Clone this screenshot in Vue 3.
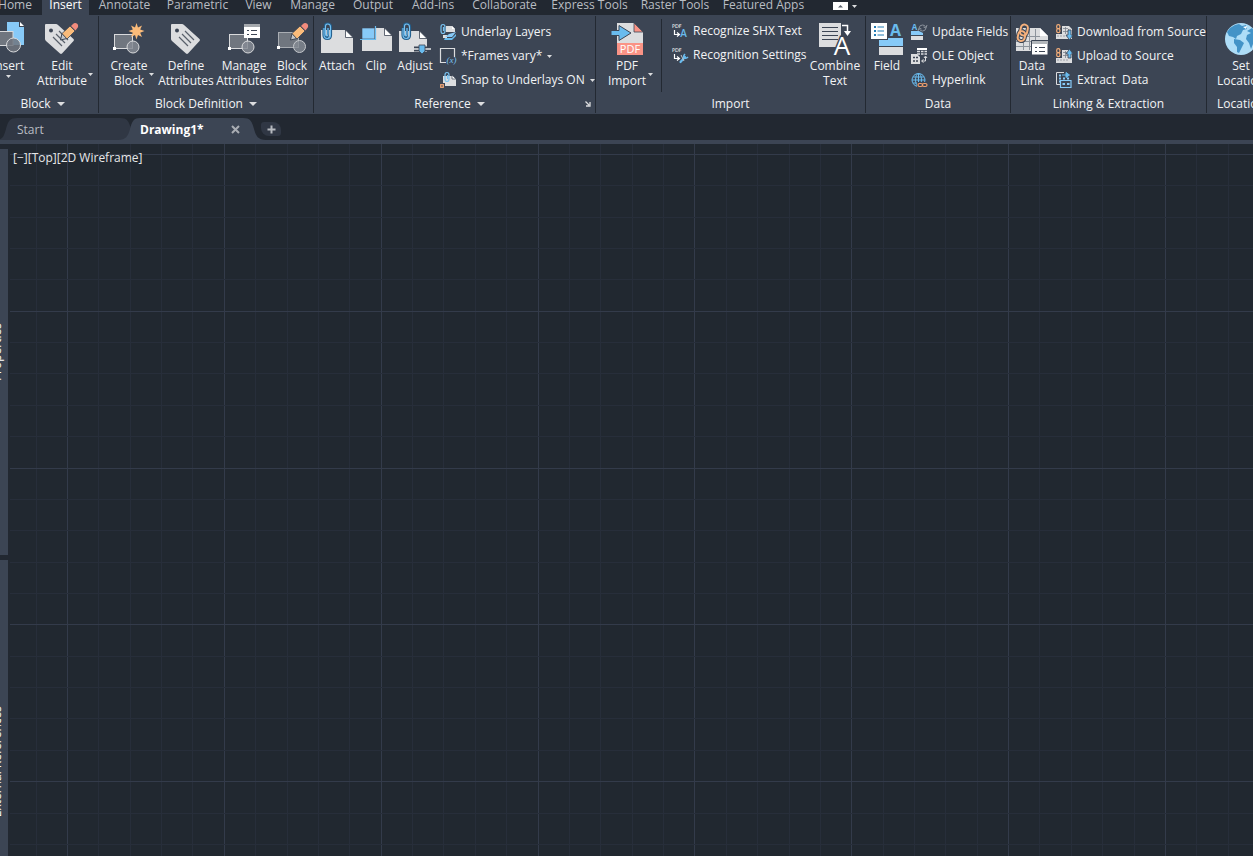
<script setup>
const menuTabs = [
  { label: 'Home', size: 'w50' },
  { label: 'Insert', size: 'w47', active: true },
  { label: 'Annotate', size: 'w67' },
  { label: 'Parametric', size: 'w75' },
  { label: 'View', size: 'w43' },
  { label: 'Manage', size: 'w61' },
  { label: 'Output', size: 'w56' },
  { label: 'Add-ins', size: 'w60' },
  { label: 'Collaborate', size: 'w79' },
  { label: 'Express Tools', size: 'w87' },
  { label: 'Raster Tools', size: 'w80' },
  { label: 'Featured Apps', size: 'w93' }
]

const tag = '<path d="M-1 3Q-1 2 0 2H10Q11 2 12 3L27.500 17Q28.500 18 27.500 19L16 31.500Q15 32.300 14 31.500L0 19Q-1 18 -1 17Z" fill="#dcdddf"/><circle cx="5" cy="8.500" r="2" fill="#3c4554"/><path d="M13 9L22 18M10 12L19 21M7 15L16 24" stroke="#59606b" stroke-width="1.200" fill="none"/>'
const pencil = '<path d="M14.500 18L16 11.500L21 16.500Z" fill="#c4c7cb" stroke="#3c4554"/><path d="M16 11.500L24 4L29 9L21 17Z" fill="#fabb7a" stroke="#3c4554" stroke-width=".8"/><path d="M25 4L27 2Q29 0 31.500 2Q33 4.500 31 6.500L29.500 8.500Z" fill="#f28b7d"/>'
const block = '<rect x="1.500" y="12.500" width="18" height="14" fill="#70767f" stroke="#d9dadc"/><circle cx="20" cy="25" r="6" fill="#858b94" fill-opacity=".85" stroke="#d9dadc"/><rect x="0" y="25" width="3" height="3" fill="#fff"/>'
const clip = '<path d="M7 6V13Q7 15 5.500 15Q4 15 4 13V4Q4 1.500 6.500 1.500Q10 1.500 10 5V13Q10 17 6.500 17Q2.500 17 2.500 13V6" fill="none" stroke="#235f8c" stroke-width="2.200"/><path d="M7 6V12Q7 14 6 14Q4.500 14 4.500 12V4.500Q4.500 2 6.500 2Q9.500 2 9.500 5V13Q9.500 16.500 6.500 16.500Q3 16.500 3 13V6" fill="none" stroke="#78c2f2" stroke-width="1.100"/>'
const miniClip = '<path d="M3.500 3V7M1 3V7Q1 9.500 3 9.500Q5 9.500 5 7V3Q5 .500 3 .500Q1 .500 1 3" fill="none" stroke="#79c3f2" stroke-width="1.200"/>'
const pdfMini = '<text x="0" y="5" font-family="DejaVu Sans" font-size="5" fill="#fff">PDF</text><path d="M2.500 7V11.500H6.500M5 9.500L7.500 11.500L5 13.500" fill="none" stroke="#fff" stroke-width="1.200"/>'
const miniGrid = '<path d="M6 2H13L16 5V14H6Z" fill="#dcdddf"/><path d="M7 4.500H12M7 7.500H15M7 10.500H15M9.500 3V12M12.500 5V12" stroke="#7b818a" stroke-width=".8"/><path d="M0 10H16V15H0Z" fill="#dcdddf"/><path d="M2 11V13M5 11V13M8 11V13M11 11V13" stroke="#8d939b" stroke-width=".8"/><rect x=".7" y=".7" width="3.200" height="4" rx="1.500" fill="none" stroke="#f2ac78" stroke-width="1.200"/><rect x=".7" y="4.700" width="3.200" height="4" rx="1.500" fill="none" stroke="#f2ac78" stroke-width="1.200"/>'

const icons = {
  insert: '<path d="M15 0H27V5H32V23H15Z" fill="#87caf8"/><path d="M28 0L32 4H28Z" fill="#fff"/><rect x="0" y="9.500" width="21" height="14" fill="#70767f" stroke="#d9dadc"/><circle cx="21.500" cy="23" r="7" fill="#70767f" fill-opacity=".85" stroke="#d9dadc"/>',
  editAttribute: tag + pencil,
  createBlock: block + '<path d="M23.500 1L25 5.500L29 3.500L27.200 7.500L31.500 9L27.200 10.700L29 15L25 13L23.500 17.500L22 13L18 15L19.800 10.700L15.500 9L19.800 7.500L18 3.500L22 5.500Z" fill="#fabb7a"/>',
  define: '<g transform="translate(2 0)">' + tag + '</g>',
  manage: block + '<rect x="16" y="2" width="16" height="14" fill="#fff"/><rect x="16" y="2" width="16" height="3" fill="#a4a8ad"/><path d="M19 8.500H21M23 8.500H29M19 12.500H21M23 12.500H29" stroke="#3c4554"/>',
  editor: '<rect x="2.500" y="10.500" width="20" height="15" fill="#70767f" stroke="#a9adb3"/><circle cx="23.500" cy="24.500" r="6" fill="#858b94" fill-opacity=".8" stroke="#c5c8cc"/><rect x="1" y="24" width="3" height="3" fill="#fff"/>' + pencil,
  attach: '<path d="M0 8H24L32 16V31H0Z" fill="#dcdddf"/><path d="M24.500 8L32 15.500H24.500Z" fill="#fff" stroke="#3c4554" stroke-width=".8"/>' + clip,
  clip: '<path d="M2 6H24L32 14V29H2Z" fill="#dcdddf"/><path d="M24.500 6L32 13.500H24.500Z" fill="#fff" stroke="#3c4554" stroke-width=".8"/><path d="M2 6H14.500V17H2Z" fill="#87caf8" stroke="#3c4554" stroke-width=".6"/><path d="M0 17.500H15.500V4" fill="none" stroke="#69bbee" stroke-width="1.200"/>',
  adjust: '<path d="M0 9H20L28 17V30H0Z" fill="#dcdddf"/><path d="M20.500 9L28 16.500H20.500Z" fill="#fff" stroke="#3c4554" stroke-width=".8"/><path d="M15 24.500H32V29.500H15Z" fill="#3c4554"/><path d="M15 27H32" stroke="#e6e7e8" stroke-width="1.500"/><path d="M20 23H26V29L23 32L20 29Z" fill="#69bbee" stroke="#3c4554" stroke-width=".8"/><g transform="translate(1 0)">' + clip + '</g>',
  pdf: '<path d="M6 1H23L32 10V33H6Z" fill="#dcdddf"/><path d="M23 1L32 10H23Z" fill="#fa9386" stroke="#3c4554" stroke-width=".8"/><path d="M6 21H32V33H6Z" fill="#fa9386"/><text x="19" y="31" text-anchor="middle" font-family="Open Sans" font-size="11" fill="#fff">PDF</text><path d="M0 8.500H8V3.500L20 11L8 18.500V13.500H0Z" fill="#69bbee" stroke="#3c4554"/>',
  combine: '<path d="M0 1H22V25H0Z" fill="#dcdddf"/><path d="M3 5.500H19M3 9.500H19M3 13.500H19M3 17.500H19" stroke="#3c4554" stroke-width="1.200"/><text x="23" y="32.500" text-anchor="middle" font-family="Open Sans" font-size="26" fill="#fff" stroke="#3c4554" stroke-width="3" paint-order="stroke">A</text><path d="M23 3.500H28.500V9" fill="none" stroke="#fff" stroke-width="1.500"/><path d="M25 9H32L28.500 14Z" fill="#fff"/>',
  field: '<path d="M0 1H16V17H0Z" fill="#fff"/><path d="M3 5H5M3 9H5M3 13H5" stroke="#247cb5" stroke-width="2"/><path d="M6.500 5H13M6.500 9H13M6.500 13H13" stroke="#247cb5"/><path d="M17 16H32V24H8V18H17Z" fill="#87caf8"/><path d="M8 25H32V33H8Z" fill="#dcdddf"/><text x="24.500" y="14" text-anchor="middle" font-family="Open Sans" font-weight="700" font-size="16" fill="#69bbee">A</text>',
  dataLink: '<path d="M0 6H24L32 14V29H0Z" fill="#dcdddf"/><path d="M0 14.500H24M0 19.500H30M0 24.500H30M7.500 7V28M13.500 7V28M19.500 7V28" stroke="#8d939b"/><path d="M24 6L32 14H24Z" fill="#fff"/><g fill="none" stroke="#3c4554" stroke-width="4"><rect x="4.500" y="2.500" width="7" height="11" rx="3.500" transform="rotate(12 8 8)"/><rect x="2" y="9" width="7" height="10" rx="3.500" transform="rotate(12 5 14)"/></g><g fill="none" stroke="#f4b07c" stroke-width="2"><rect x="4.500" y="2.500" width="7" height="11" rx="3.500" transform="rotate(12 8 8)"/><rect x="2" y="9" width="7" height="10" rx="3.500" transform="rotate(12 5 14)"/></g><path d="M15.500 18.500H32V33H15.500Z" fill="#fff" stroke="#3c4554"/><path d="M16 19H32V22H16Z" fill="#b2b6ba"/><path d="M19 25.500H21M23 25.500H29M19 29.500H21M23 29.500H29" stroke="#3c4554"/>',
  globe: '<circle cx="16" cy="17" r="16" fill="#aeddf7"/><path d="M2 10L5 6L10 3L14 2L17 4L21 3L22 7L18 8L16 12L12 14L11 17L8 15L4 14ZM9 17L15 18L19 21L17 25L14 31L12 30L12 25L9 21ZM22 9L27 6L31 12L32 18L28 22L26 27L24 21L21 17L22 13L26 11Z" fill="#4393c7"/><path d="M18 5L22 4L21 7Z" fill="#fff"/>',
  layers: '<path d="M6 2H12L15 5V8H6Z" fill="#dcdddf"/><path d="M12 2L15 5H12Z" fill="#fff"/><path d="M3 11H7V14H3Z" fill="#dcdddf"/><path d="M9 10L16 8L12 13L5 13Z" fill="#87caf8"/><path d="M5 14L12 14L16 10V12L12 16H4Z" fill="#69bbee"/>' + miniClip,
  frames: '<path d="M6 14.500H.500V.500H14.500V9" fill="none" stroke="#dcdddf" stroke-width="1.200"/><text x="6.500" y="15" font-family="Liberation Serif" font-style="italic" font-size="9" fill="#79c3f2">(x)</text>',
  snap: '<path d="M3 4H13L16 7V14H5V11H3Z" fill="#dcdddf"/><path d="M12 3L16 7H12Z" fill="#fff" stroke="#3c4554" stroke-width=".7"/><rect x=".7" y="12.700" width="2.600" height="2.600" fill="none" stroke="#f4a878" stroke-width="1.200"/><g transform="translate(4 0)">' + miniClip + '</g>',
  shx: pdfMini + '<text x="11.500" y="14" text-anchor="middle" font-family="Open Sans" font-size="10" font-weight="600" fill="#69bbee">A</text>',
  settings: pdfMini + '<path d="M8.500 15L13 10" stroke="#69bbee" stroke-width="2.200" stroke-linecap="round"/><path d="M13 7Q11 9 12 10.500Q14 12 16 10" stroke="#69bbee" stroke-width="1.600" fill="none"/><path d="M9 8L12 14" stroke="#c3c6ca"/>',
  update: '<text x="3.500" y="6" text-anchor="middle" font-family="Open Sans" font-weight="700" font-size="8" fill="#69bbee">A</text><path d="M8 4Q8.500 1 11.500 1Q14 1 14.500 3M15 4Q14.500 7 11.500 7Q9 7 8.500 5M16 1L15 4L12.500 3M7 7L8 4L10.500 5" fill="none" stroke="#8b929c"/><path d="M0 7H8L12 9V11H0Z" fill="#87caf8"/><path d="M0 12H12V16H0Z" fill="#dcdddf"/>',
  ole: '<path d="M6 0H16V2H6Z" fill="#fff"/><path d="M6 3.500H9M10 3.500H12.500M13.500 3.500H16M6 6H9M10 6H12.500M13.500 6H16" stroke="#dcdddf" stroke-width="1.300"/><path d="M0 6H6L9 9V16H0Z" fill="#dcdddf"/><path d="M2 9.500H4M5 9.500H7M2 13H4M5 13H7" stroke="#3c4554" stroke-width="1.500"/><path d="M14.500 9V13H11M13 10L14.500 8L16 10M12.500 11.500L10.500 13L12.500 14.500" fill="none" stroke="#dcdddf"/>',
  hyperlink: '<circle cx="7.500" cy="8" r="6.500" fill="none" stroke="#69bbee"/><ellipse cx="7.500" cy="8" rx="3" ry="6.500" fill="none" stroke="#69bbee"/><path d="M1 8H14M2 5H13M2 11H13M7.500 1V15" stroke="#69bbee"/><path d="M6 10H17V16H6Z" fill="#3c4554"/><rect x="7" y="11.500" width="4.500" height="3" rx="1.500" fill="none" stroke="#f2a06d" stroke-width="1.200"/><rect x="11.500" y="11.500" width="4.500" height="3" rx="1.500" fill="none" stroke="#f2a06d" stroke-width="1.200"/>',
  download: miniGrid + '<path d="M12 6H15V11H17L13.500 16L10 11H12Z" fill="#69bbee" stroke="#3c4554" stroke-width=".8"/>',
  upload: miniGrid + '<path d="M12 10H15V6H17L13.500 1L10 6H12Z" fill="#69bbee" stroke="#3c4554" stroke-width=".8"/>',
  extract: '<path d="M.500 12.500V.500H8" fill="none" stroke="#dcdddf"/><path d="M.500 12.500H4" stroke="#dcdddf"/><path d="M3 3.500H5M3 6.500H5M3 9.500H5M7 6.500H9M11 6.500H13" stroke="#87caf8" stroke-width="2"/><path d="M6 3H11M10 .500L13.500 3L10 5.500Z" stroke="#69bbee" fill="#69bbee"/><path d="M4.500 8.500H15V15.500H4.500Z" fill="#3c4554" stroke="#87caf8" stroke-width="1.200"/><path d="M6.500 12H9M11 12H13.500" stroke="#87caf8" stroke-width="2"/>'
}

const panels = [
  {
    title: 'Block', size: 'p-block', menu: true,
    groups: [{ big: [
      { icon: 'insert', lines: ['Insert'], size: 'w32', below: true },
      { icon: 'editAttribute', lines: ['Edit', 'Attribute'], size: 'w62', caret: true }
    ] }]
  },
  {
    title: 'Block Definition', size: 'p-definition', menu: true,
    groups: [{ big: [
      { icon: 'createBlock', lines: ['Create', 'Block'], size: 'w50', caret: true },
      { icon: 'define', lines: ['Define', 'Attributes'], size: 'w52' },
      { icon: 'manage', lines: ['Manage', 'Attributes'], size: 'w52' },
      { icon: 'editor', lines: ['Block', 'Editor'], size: 'w32' }
    ] }]
  },
  {
    title: 'Reference', size: 'p-reference', menu: true, launcher: true,
    groups: [
      { big: [
        { icon: 'attach', lines: ['Attach'], size: 'w34' },
        { icon: 'clip', lines: ['Clip'], size: 'w32' },
        { icon: 'adjust', lines: ['Adjust'], size: 'w34' }
      ] },
      { small: [
        { icon: 'layers', label: 'Underlay Layers' },
        { icon: 'frames', label: '*Frames vary*', caret: true },
        { icon: 'snap', label: 'Snap to Underlays ON', caret: true }
      ] }
    ]
  },
  {
    title: 'Import', size: 'p-import',
    groups: [
      { big: [{ icon: 'pdf', lines: ['PDF', 'Import'], size: 'w52', caret: true }] },
      { divided: true, small: [
        { icon: 'shx', label: 'Recognize SHX Text' },
        { icon: 'settings', label: 'Recognition Settings' }
      ] },
      { big: [{ icon: 'combine', lines: ['Combine', 'Text'], size: 'w50' }] }
    ]
  },
  {
    title: 'Data', size: 'p-data',
    groups: [
      { big: [{ icon: 'field', lines: ['Field'], size: 'w32' }] },
      { small: [
        { icon: 'update', label: 'Update Fields' },
        { icon: 'ole', label: 'OLE Object' },
        { icon: 'hyperlink', label: 'Hyperlink' }
      ] }
    ]
  },
  {
    title: 'Linking & Extraction', size: 'p-linking',
    groups: [
      { big: [{ icon: 'dataLink', lines: ['Data', 'Link'], size: 'w32' }] },
      { small: [
        { icon: 'download', label: 'Download from Source' },
        { icon: 'upload', label: 'Upload to Source' },
        { icon: 'extract', label: 'Extract  Data' }
      ] }
    ]
  },
  {
    title: 'Location', size: 'p-location',
    groups: [{ big: [{ icon: 'globe', lines: ['Set', 'Location'], size: 'w56' }] }]
  }
]

// Grid lines: every fifth one is a major line.
const spacing = 31.37
const gridLines = (origin) =>
  Array.from({ length: 130 }, (_, i) => ({ at: Math.round(origin + (i - 1) * spacing) + 0.5, major: (i - 1) % 5 === 0 }))
const columns = gridLines(57)
const rows = gridLines(9.8)
const sorted = (lines) => [...lines].sort((a, b) => a.major - b.major)
</script>

<template>
  <div class="app">
    <nav class="menu" aria-label="Ribbon tabs">
      <button v-for="t in menuTabs" :key="t.label" type="button" class="menu-tab" :class="[t.size, { active: t.active }]">{{ t.label }}</button>
      <button type="button" class="minimize" aria-label="Minimize ribbon">
        <svg class="min-box" viewBox="0 0 15 8"><path d="M0 0H15V8H0Z" fill="#fff" /><path d="M5 5.500L7.500 3L10 5.500Z" fill="#59606b" /></svg>
        <svg class="caret" viewBox="0 0 5 3"><path d="M0 0H5L2.500 3Z" /></svg>
      </button>
    </nav>

    <div class="ribbon">
      <section v-for="p in panels" :key="p.title" class="panel" :class="p.size">
        <div class="panel-body">
          <template v-for="(g, i) in p.groups" :key="i">
            <div v-if="g.big" class="bigs">
              <button v-for="b in g.big" :key="b.icon" type="button" class="big" :class="[b.size, { 'has-caret': b.caret }]">
                <span class="stack">
                  <svg class="icon32" viewBox="0 0 32 34" v-html="icons[b.icon]"></svg>
                  <span v-for="l in b.lines" :key="l" class="line">{{ l }}</span>
                  <svg v-if="b.below" class="caret below" viewBox="0 0 5 3"><path d="M0 0H5L2.500 3Z" /></svg>
                </span>
                <svg v-if="b.caret" class="caret side" viewBox="0 0 5 3"><path d="M0 0H5L2.500 3Z" /></svg>
              </button>
            </div>
            <div v-else class="smalls" :class="{ divided: g.divided }">
              <button v-for="s in g.small" :key="s.icon" type="button" class="small">
                <svg class="icon16" viewBox="0 0 16 16" v-html="icons[s.icon]"></svg>
                <span class="small-label">{{ s.label }}</span>
                <svg v-if="s.caret" class="caret" viewBox="0 0 5 3"><path d="M0 0H5L2.500 3Z" /></svg>
              </button>
            </div>
          </template>
        </div>
        <footer class="panel-title">
          <button v-if="p.menu" type="button" class="title-button">
            {{ p.title }}
            <svg class="title-caret" viewBox="0 0 8 4"><path d="M0 0H8L4 4Z" /></svg>
          </button>
          <span v-else>{{ p.title }}</span>
          <button v-if="p.launcher" type="button" class="launcher" aria-label="Reference settings">
            <svg viewBox="0 0 6 6"><path d="M.500 .500L4 4M5 1V5H1" fill="none" stroke="#dcdddf" stroke-width="1.300" /></svg>
          </button>
        </footer>
      </section>
    </div>

    <div class="files">
      <div class="file start">
        <svg class="file-shape" viewBox="0 0 148 22" preserveAspectRatio="none"><path d="M0 22C8 22 9 18 11 11C13 3 15 0 22 0H125C132 0 134 3 136 11C138 18 140 22 148 22Z" fill="#303744" /></svg>
        <button type="button" class="file-name">Start</button>
      </div>
      <div class="file current">
        <svg class="file-shape" viewBox="0 0 148 22" preserveAspectRatio="none"><path d="M0 22C8 22 10 18 12 11C14 3 16 0 22 0H125C132 0 134 3 136 11C138 18 140 22 148 22Z" fill="#3c4554" /></svg>
        <button type="button" class="file-name">Drawing1*</button>
        <button type="button" class="close" aria-label="Close drawing"><svg viewBox="0 0 9 9"><path d="M1 1L8 8M8 1L1 8" stroke="#a9adb3" stroke-width="2" /></svg></button>
      </div>
      <button type="button" class="new" aria-label="New drawing"><svg viewBox="0 0 9 9"><path d="M4.500 .500V8.500M.500 4.500H8.500" stroke="#b6babf" stroke-width="2" /></svg></button>
    </div>

    <div class="workspace">
      <aside class="palettes">
        <div class="palette properties"><span>Properties</span></div>
        <div class="palette references"><span>External References</span></div>
      </aside>
      <main class="canvas">
        <svg class="grid" aria-hidden="true">
          <line v-for="c in sorted(columns)" :key="'c' + c.at" :x1="c.at" :x2="c.at" y1="0" y2="100%" :class="{ major: c.major }" />
          <line v-for="r in sorted(rows)" :key="'r' + r.at" :y1="r.at" :y2="r.at" x1="0" x2="100%" :class="{ major: r.major }" />
        </svg>
        <div class="view-controls"><button type="button">[−]</button><button type="button">[Top]</button><button type="button">[2D Wireframe]</button></div>
      </main>
    </div>
  </div>
</template>

<style>
body { margin: 0; background: #212830; }
</style>

<style scoped>
.app {
  display: flex;
  flex-direction: column;
  height: 100vh;
  overflow: hidden;
  background: #222831;
  color: #f2f3f4;
  font: 12px/15px "Open Sans", "Noto Sans", sans-serif;
}
button {
  border: 0;
  padding: 0;
  margin: 0;
  background: none;
  color: inherit;
  font: inherit;
  white-space: nowrap;
}
svg { display: block; flex: none; }
.w32 { width: 32px; }
.w34 { width: 34px; }
.w43 { width: 43px; }
.w47 { width: 47px; }
.w50 { width: 50px; }
.w52 { width: 52px; }
.w56 { width: 56px; }
.w60 { width: 60px; }
.w61 { width: 61px; }
.w62 { width: 62px; }
.w67 { width: 67px; }
.w75 { width: 75px; }
.w79 { width: 79px; }
.w80 { width: 80px; }
.w87 { width: 87px; }
.w93 { width: 93px; }

.menu {
  display: flex;
  flex: none;
  gap: 2px;
  height: 15px;
  margin-left: -10px;
  color: #b9bdc3;
}
.menu-tab {
  display: flex;
  flex: none;
  justify-content: center;
  align-items: flex-end;
  height: 15px;
  line-height: 20px;
}
.menu-tab.active { background: #3c4554; color: #fff; }
.minimize { display: flex; align-items: center; gap: 4px; height: 12px; margin-left: 21px; }
.min-box { width: 15px; height: 8px; }
.caret { width: 5px; height: 3px; fill: #dcdddf; }

.ribbon {
  display: flex;
  flex: none;
  overflow: hidden;
  height: 99px;
  padding-top: 1px;
  box-sizing: border-box;
  background: #3c4554;
}
.panel {
  display: flex;
  flex: none;
  flex-direction: column;
  box-sizing: border-box;
  height: 97px;
  border-right: 1px solid #232932;
}
.p-block { width: 112px; margin-left: -13px; }
.p-definition { width: 215px; }
.p-reference { width: 282px; }
.p-import { width: 270px; }
.p-data { width: 145px; }
.p-linking { width: 196px; }
.p-location { width: 68px; border-right: 0; }
.panel-body { display: flex; flex: 1; gap: 8px; padding: 6px 5px 0; }
.p-location .panel-body { padding-left: 6px; }
.p-reference .panel-body { padding-left: 6px; }
.p-block .bigs { gap: 7px; }

.bigs { display: flex; gap: 6px; align-items: flex-start; }
.big { display: flex; flex: none; justify-content: center; }
.stack { display: flex; flex: 1; flex-direction: column; align-items: center; min-width: 0; }
.has-caret .stack { margin-right: -5px; }
.icon32 { width: 32px; height: 34px; margin-bottom: 2px; overflow: visible; }
.line { white-space: nowrap; }
.side { margin-top: 51px; }
.below { margin-top: 2px; }

.smalls { display: flex; flex-direction: column; align-items: flex-start; gap: 8px; margin-top: 2px; }
.small { display: flex; align-items: center; gap: 5px; height: 16px; }
.small-label { padding-bottom: 2px; white-space: pre; }
.icon16 { width: 16px; height: 16px; overflow: visible; }
.divided {
  box-sizing: border-box;
  width: 141px;
  height: 73px;
  margin-top: -3px;
  padding: 4px 0 0 10px;
  border-left: 1px solid #232932;
}

.panel-title { display: flex; flex: none; align-items: center; justify-content: center; height: 18px; line-height: 14px; padding-bottom: 1px; box-sizing: border-box; }
.title-button { display: flex; align-items: center; gap: 6px; }
.title-caret { width: 8px; height: 4px; fill: #dcdddf; }
.p-reference .title-button { margin-left: auto; }
.launcher { margin-left: auto; width: 6px; margin-right: 4px; }
.launcher svg { width: 6px; height: 6px; }

.files {
  display: flex;
  flex: none;
  align-items: stretch;
  height: 30px;
  box-sizing: border-box;
  padding-top: 4px;
  border-bottom: 4px solid #3c4554;
}
.file { position: relative; display: flex; flex: none; align-items: center; width: 148px; }
.start { margin-left: -5px; }
.current { margin-left: -25px; font-weight: 700; color: #fff; }
.file-shape { position: absolute; inset: 0; width: 100%; height: 100%; }
.file-name { position: relative; padding-left: 22px; color: #b9bdc3; }
.current .file-name { color: #fff; }
.close { position: relative; margin-left: auto; margin-right: 26px; }
.close svg, .new svg { width: 9px; height: 9px; }
.new {
  display: flex;
  align-items: center;
  justify-content: center;
  align-self: center;
  width: 20px;
  height: 14px;
  margin-left: -5px;
  border-radius: 3px 8px 3px 8px;
  background: #303744;
}

.workspace { display: flex; flex: 1; min-height: 0; gap: 2px; }
.palettes { display: flex; flex: none; flex-direction: column; gap: 5px; width: 8px; padding-top: 5px; }
.palette {
  display: flex;
  align-items: center;
  justify-content: flex-end;
  overflow: hidden;
  background: #3c4554;
  color: #fff;
}
.properties { flex: 406; }
.references { flex: 296; }
.palette span { writing-mode: vertical-rl; transform: rotate(180deg); margin-right: 4px; white-space: nowrap; }
.references span { margin-top: 108px; }

.canvas { position: relative; flex: 1; overflow: hidden; background: #212830; }
.grid { position: absolute; inset: 0; width: 100%; height: 100%; }
.grid line { stroke: #272e3a; stroke-width: 1; }
.grid line.major { stroke: #333b4a; }
.view-controls { position: relative; display: flex; padding: 6px 3px; color: #e6e7e8; }
</style>
